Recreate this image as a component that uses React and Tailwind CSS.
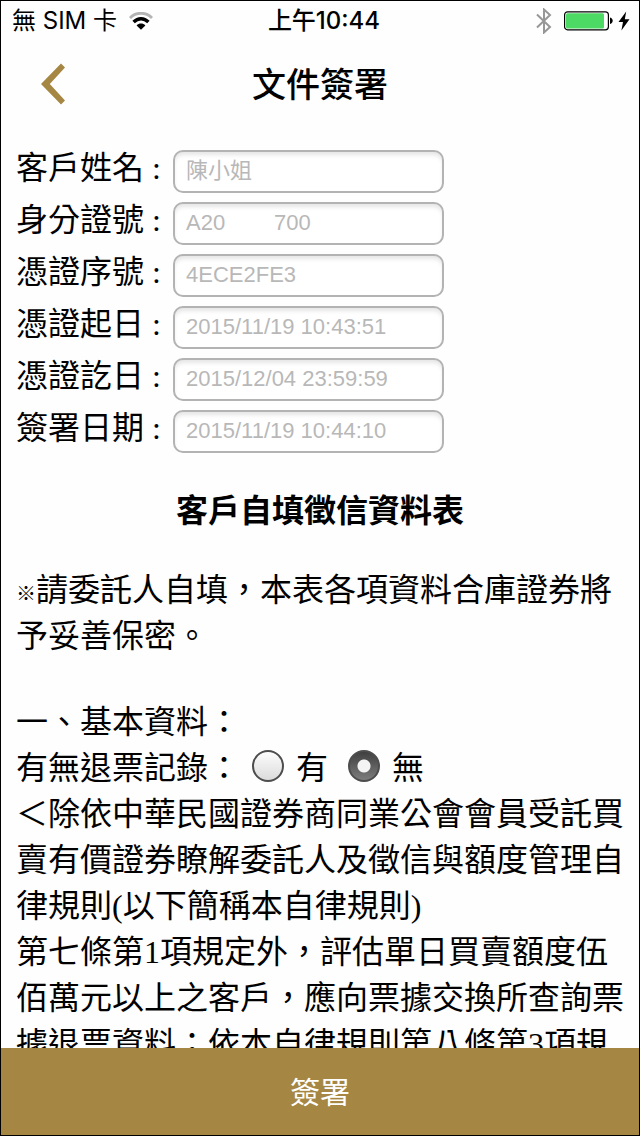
import React from 'react';

const fields = [
  { id: 'name', label: '客戶姓名', value: '陳小姐' },
  { id: 'idNumber', label: '身分證號', value: 'A20        700' },
  { id: 'certSerial', label: '憑證序號', value: '4ECE2FE3' },
  { id: 'certStart', label: '憑證起日', value: '2015/11/19 10:43:51' },
  { id: 'certEnd', label: '憑證訖日', value: '2015/12/04 23:59:59' },
  { id: 'signDate', label: '簽署日期', value: '2015/11/19 10:44:10' },
];

const WifiIcon = () => (
  <svg width="24" height="18" viewBox="0 0 24 18" fill="none" aria-hidden="true">
    <path d="M1 6C7 -0.2 17 -0.2 23 6" stroke="#b4b4b4" strokeWidth="3" />
    <path d="M4.6 10C9 5.6 15 5.6 19.4 10" stroke="#000" strokeWidth="3.4" />
    <path d="M7.6 13.4C10.1 11 13.9 11 16.4 13.4L12 17.8Z" fill="#000" />
  </svg>
);

const BluetoothIcon = () => (
  <svg width="16" height="26" viewBox="0 0 16 26" fill="none" aria-hidden="true">
    <path d="M1 6.5L14 19L8 24.5V1.5L14 7L1 19.5" stroke="#979797" strokeWidth="2" />
  </svg>
);

const BatteryIcon = () => (
  <svg width="49" height="20" viewBox="0 0 49 20" aria-hidden="true">
    <rect x="0.6" y="0.8" width="43.8" height="18" rx="3" fill="#fff" stroke="#000" strokeWidth="1.2" />
    <rect x="2" y="2.2" width="38" height="15.2" rx="1.5" fill="#4cd964" />
    <path d="M46 6.5C49.6 7.6 49.6 12 46 13.1Z" fill="#000" />
  </svg>
);

const BoltIcon = () => (
  <svg width="12" height="20" viewBox="0 0 12 20" aria-hidden="true">
    <path d="M8.2 0.5L0.5 11H5L3.4 19.5L11.5 8.2H6.8Z" fill="#000" />
  </svg>
);

const StatusBar = () => (
  <div className="grid h-10 shrink-0 grid-cols-3 items-center px-[9px] font-[Inter,'Noto_Sans_CJK_TC',sans-serif] text-2xl">
    <div className="flex items-center gap-3 pl-0.5 whitespace-nowrap">
      <span>無 SIM 卡</span>
      <WifiIcon />
    </div>
    <div className="pl-2 text-center font-medium whitespace-nowrap">上午10:44</div>
    <div className="flex items-center justify-end">
      <BluetoothIcon />
      <span className="ml-3">
        <BatteryIcon />
      </span>
      <span className="ml-[5px]">
        <BoltIcon />
      </span>
    </div>
  </div>
);

const Header = () => (
  <header className="grid h-[86px] shrink-0 grid-cols-[1fr_auto_1fr] items-center px-10">
    <button type="button" aria-label="返回" className="w-6">
      <svg width="24" height="42" viewBox="0 0 24 42" aria-hidden="true">
        <path d="M0 21L20 0.5L24 4.5L8.8 21L24 37.5L20 41.5Z" fill="#a58643" />
      </svg>
    </button>
    <h1 className="pt-0.5 text-[34px] font-medium">文件簽署</h1>
  </header>
);

const Field = ({ id, label, value }) => (
  <div className="flex items-start gap-3">
    <label htmlFor={id} className="w-[145px] shrink-0 whitespace-nowrap leading-9">
      {label} :
    </label>
    <input
      id={id}
      type="text"
      defaultValue={value}
      disabled
      className="h-[43px] w-[271px] rounded-[10px] border-2 border-[#b3b3b3] bg-white px-[11px] pb-0.5 font-['Liberation_Sans','Noto_Sans_CJK_TC',sans-serif] text-[22px] text-[#b8b8b8] shadow-[inset_0_4px_4px_-1px_#e6e6e6]"
    />
  </div>
);

const Radio = ({ id, label, defaultChecked }) => (
  <span className="flex items-center gap-3">
    <input
      id={id}
      type="radio"
      name="bounced"
      defaultChecked={defaultChecked}
      className="mb-1 size-8 appearance-none rounded-full border-2 border-[#4d4d4d] bg-linear-to-b from-white to-[#d9d9d9] bg-origin-border checked:bg-[radial-gradient(circle,#f4f4f4_6px,transparent_7px),linear-gradient(#3c3c3c,#808080)]"
    />
    <label htmlFor={id}>{label}</label>
  </span>
);

const App = () => {
  return (
    <div className="flex h-screen flex-col border border-black bg-[#fefefe] font-['Liberation_Serif','Noto_Sans_CJK_TC',serif] text-black" lang="zh-Hant">
      <StatusBar />
      <Header />
      <main className="min-h-0 flex-1 overflow-y-auto px-[15px] pt-[23px] text-[32px] leading-[46px] [scrollbar-width:none]">
        <form className="flex flex-col gap-[9px]">
          {fields.map((field) => (
            <Field key={field.id} {...field} />
          ))}
        </form>

        <h2 className="mt-[35px] text-center font-bold">客戶自填徵信資料表</h2>

        <p className="mt-[33px]">
          <span className="font-['Noto_Sans_CJK_TC',sans-serif] text-xl leading-none font-black">※</span>請委託人自填，本表各項資料合庫證券將予妥善保密。
        </p>

        <section className="mt-10">
          <h3>一、基本資料：</h3>
          <div className="flex items-center">
            <span className="mr-3">有無退票記錄：</span>
            <div className="flex gap-5">
              <Radio id="bounced-yes" label="有" />
              <Radio id="bounced-no" label="無" defaultChecked />
            </div>
          </div>
          <p>＜除依中華民國證券商同業公會會員受託買賣有價證券瞭解委託人及徵信與額度管理自律規則(以下簡稱本自律規則)</p>
          <p>第七條第1項規定外，評估單日買賣額度伍佰萬元以上之客戶，應向票據交換所查詢票據退票資料；依本自律規則第八條第3項規</p>
        </section>
      </main>
      <button type="button" className="h-[87px] shrink-0 bg-[#a58643] pt-0.5 text-[30px] text-white">
        簽署
      </button>
    </div>
  );
};

export default App;
